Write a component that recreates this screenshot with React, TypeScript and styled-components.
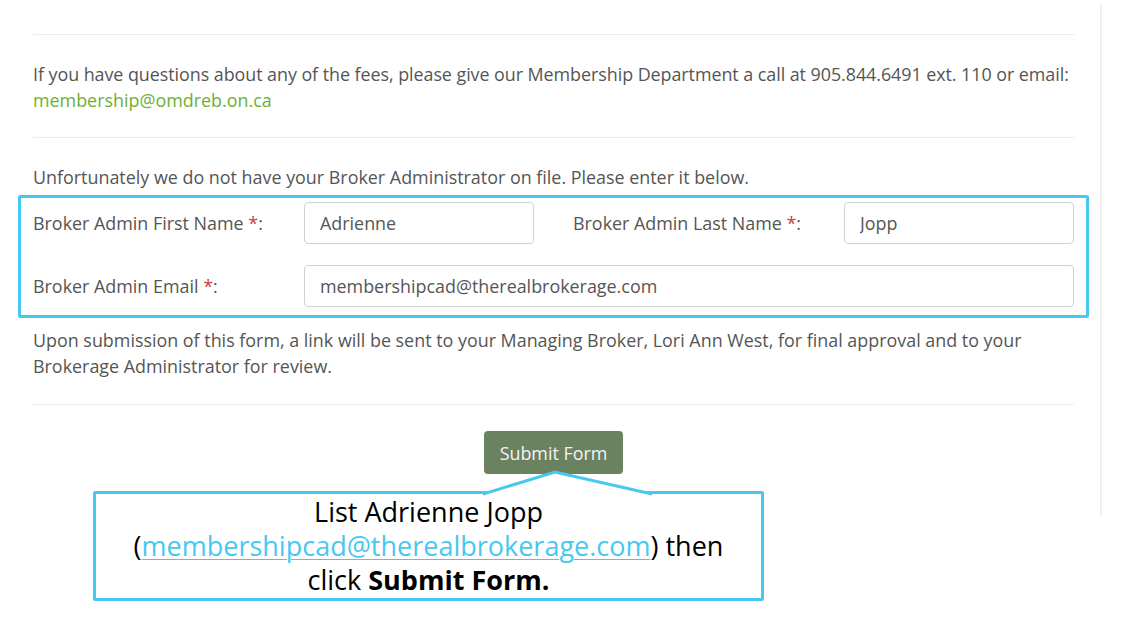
import styled, { createGlobalStyle } from 'styled-components';

const GlobalStyle = createGlobalStyle`
  html, body {
    margin: 0;
    padding: 0;
    background: #fff;
  }
  body {
    font-family: 'Open Sans', 'Noto Sans', sans-serif;
  }
`;

const BLUE = '#47c8f0';

function App() {
  return (
    <Styled.Page>
      <GlobalStyle />
      <Styled.Panel>
        <Styled.Rule />
        <Styled.Text>
          <Styled.NoWrap>
            If you have questions about any of the fees, please give our Membership Department a call at 905.844.6491 ext. 110 or email:
          </Styled.NoWrap>
          <br />
          <Styled.GreenLink href="#">membership@omdreb.on.ca</Styled.GreenLink>
        </Styled.Text>
        <Styled.Rule $top={24} />
        <Styled.Text $top={26}>
          Unfortunately we do not have your Broker Administrator on file. Please enter it below.
        </Styled.Text>
        <Styled.Highlight>
          <Styled.FormGrid>
            <Styled.Label>
              Broker Admin First Name <Styled.Req>*</Styled.Req>:
            </Styled.Label>
            <Styled.Input defaultValue="Adrienne" />
            <span />
            <Styled.Label>
              Broker Admin Last Name <Styled.Req>*</Styled.Req>:
            </Styled.Label>
            <Styled.Input defaultValue="Jopp" />
            <Styled.Label>
              Broker Admin Email <Styled.Req>*</Styled.Req>:
            </Styled.Label>
            <Styled.Input $wide defaultValue="membershipcad@therealbrokerage.com" />
          </Styled.FormGrid>
        </Styled.Highlight>
        <Styled.Text $top={9}>
          Upon submission of this form, a link will be sent to your Managing Broker, Lori Ann West, for final approval and to your Brokerage Administrator for review.
        </Styled.Text>
        <Styled.Rule $top={25} />
        <Styled.Actions>
          <Styled.SubmitButton type="button">Submit Form</Styled.SubmitButton>
        </Styled.Actions>
      </Styled.Panel>

      <Styled.Callout>
        <Styled.Pointer width="180" height="26" viewBox="0 0 180 26">
          <polyline points="0,24 72,2 169,24" fill="#fff" stroke={BLUE} strokeWidth="3" />
        </Styled.Pointer>
        <Styled.CalloutText>
          List Adrienne Jopp
          <br />(<Styled.BlueLink href="#">membershipcad@therealbrokerage.com</Styled.BlueLink>) then
          <br />click <b>Submit Form.</b>
        </Styled.CalloutText>
      </Styled.Callout>
    </Styled.Page>
  );
}

export default App;

const Styled = {
  Page: styled.div`
    position: relative;
    width: 1124px;
    height: 619px;
    overflow: hidden;
    background: #fff;
  `,
  Panel: styled.div`
    box-sizing: border-box;
    width: 1102px;
    height: 512px;
    margin-top: 4px;
    padding: 30px 26px 0 33px;
    border-right: 2px solid #efefef;
  `,
  Rule: styled.hr<{ $top?: number }>`
    margin: ${(p) => p.$top ?? 0}px 0 0;
    border: 0;
    border-top: 1px solid #ececec;
  `,
  Text: styled.p<{ $top?: number }>`
    margin: ${(p) => p.$top ?? 26}px 0 0;
    font-size: 17.9px;
    line-height: 26px;
    color: #555;
  `,
  NoWrap: styled.span`
    white-space: nowrap;
    letter-spacing: -0.05px;
  `,
  GreenLink: styled.a`
    color: #6cb12f;
    text-decoration: none;
  `,
  Highlight: styled.div`
    margin: 5px -15px 0;
    padding: 4px 12px 8px;
    border: 3px solid ${BLUE};
    border-radius: 2px;
  `,
  FormGrid: styled.div`
    display: grid;
    grid-template-columns: 271px 230px 39px 271px 230px;
    row-gap: 21px;
    align-items: center;
  `,
  Label: styled.label`
    font-size: 17.9px;
    color: #555;
  `,
  Req: styled.span`
    color: #c9403a;
  `,
  Input: styled.input<{ $wide?: boolean }>`
    box-sizing: border-box;
    height: 42px;
    width: 100%;
    padding: 0 15px;
    grid-column: ${(p) => (p.$wide ? '2 / 6' : 'auto')};
    border: 1px solid #d2d2d2;
    border-radius: 4px;
    font-family: 'Open Sans', 'Noto Sans', sans-serif;
    font-size: 17.9px;
    color: #555;
    background: #fff;
    outline: none;
  `,
  Actions: styled.div`
    display: flex;
    justify-content: center;
    margin-top: 26px;
  `,
  SubmitButton: styled.button`
    width: 139px;
    height: 43px;
    border: 0;
    border-radius: 4px;
    background: #6a825f;
    color: #f4f4f4;
    font-family: 'Open Sans', 'Noto Sans', sans-serif;
    font-size: 17.9px;
  `,
  Callout: styled.div`
    position: absolute;
    left: 93px;
    top: 491px;
    box-sizing: border-box;
    width: 671px;
    height: 110px;
    border: 3px solid ${BLUE};
    border-radius: 2px;
    background: #fff;
  `,
  Pointer: styled.svg`
    position: absolute;
    left: 387px;
    top: -24px;
    display: block;
  `,
  CalloutText: styled.p`
    margin: 0;
    padding-top: 1px;
    text-align: center;
    font-size: 27px;
    line-height: 34px;
    color: #000;
  `,
  BlueLink: styled.a`
    color: ${BLUE};
    text-decoration: underline;
    text-decoration-thickness: 1px;
    text-underline-offset: 3px;
  `,
};
